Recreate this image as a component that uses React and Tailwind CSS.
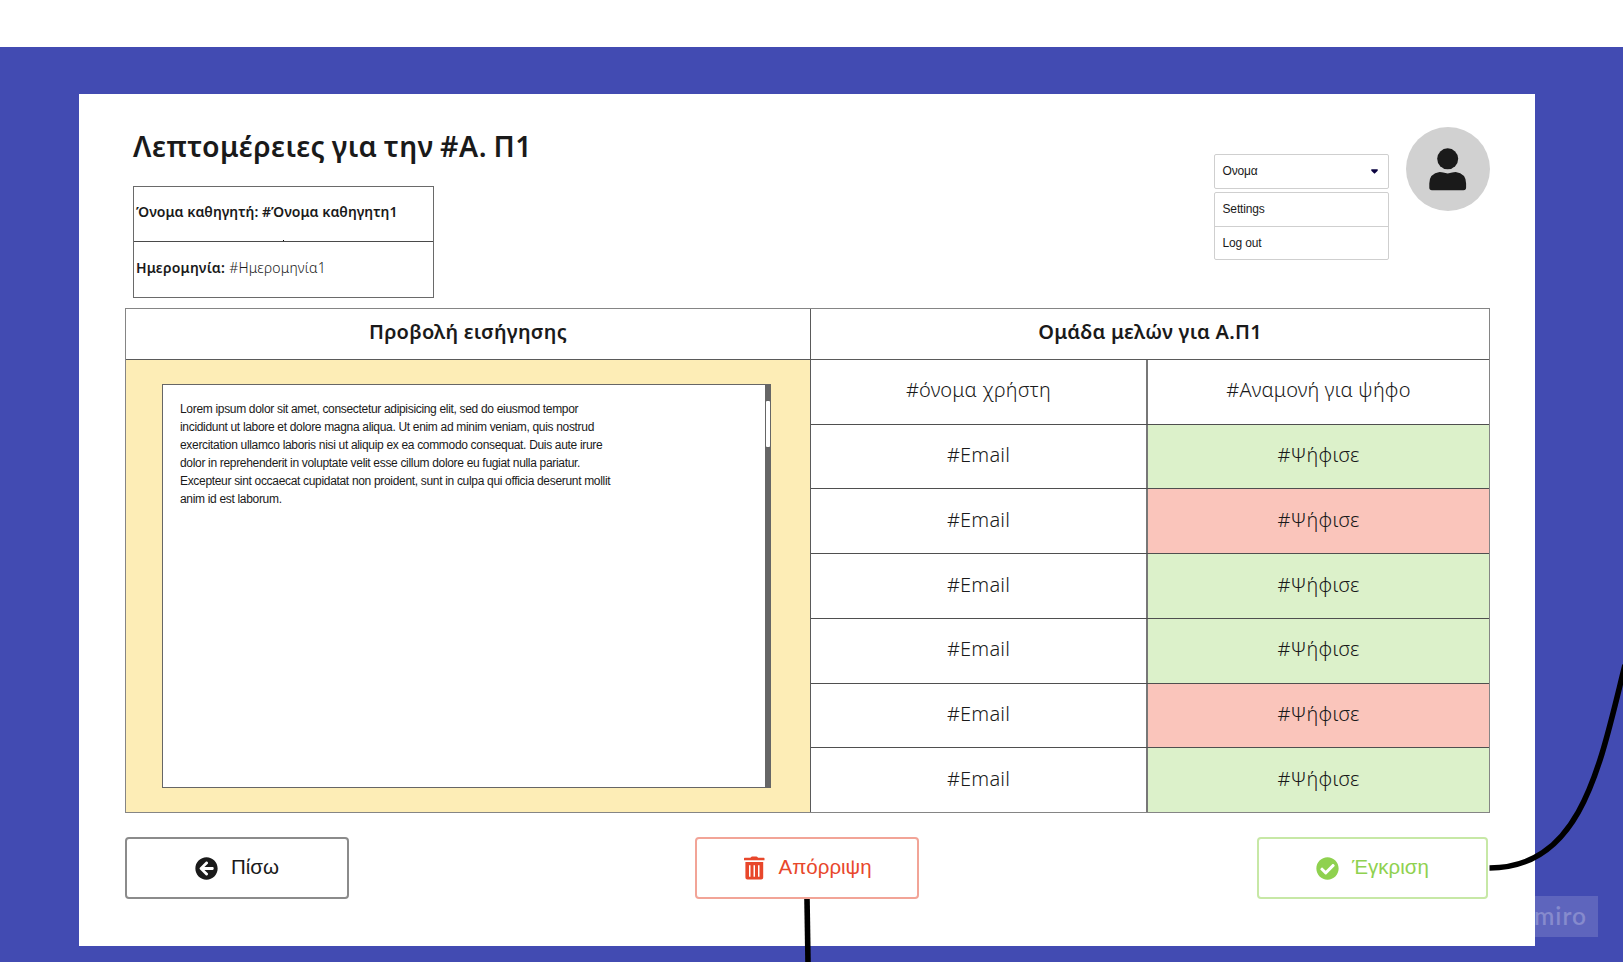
import React from "react";
import { FaArrowCircleLeft, FaCheckCircle } from "react-icons/fa";

const rows = [
  ["#όνομα χρήστη", "#Αναμονή για ψήφο", "bg-white"],
  ["#Email", "#Ψήφισε", "bg-[#dcf1ca]"],
  ["#Email", "#Ψήφισε", "bg-[#fac5bb]"],
  ["#Email", "#Ψήφισε", "bg-[#dcf1ca]"],
  ["#Email", "#Ψήφισε", "bg-[#dcf1ca]"],
  ["#Email", "#Ψήφισε", "bg-[#fac5bb]"],
  ["#Email", "#Ψήφισε", "bg-[#dcf1ca]"],
];

const lorem = [
  "Lorem ipsum dolor sit amet, consectetur adipisicing elit, sed do eiusmod tempor",
  "incididunt ut labore et dolore magna aliqua. Ut enim ad minim veniam, quis nostrud",
  "exercitation ullamco laboris nisi ut aliquip ex ea commodo consequat. Duis aute irure",
  "dolor in reprehenderit in voluptate velit esse cillum dolore eu fugiat nulla pariatur.",
  "Excepteur sint occaecat cupidatat non proident, sunt in culpa qui officia deserunt mollit",
  "anim id est laborum.",
];

function TrashIcon() {
  return (
    <svg width="21" height="24" viewBox="0 0 21 24" fill="currentColor">
      <path d="M.6 1.8H6.4L7.4 .7Q7.7 .4 8.2 .4H12.3Q12.8 .4 13.1 .7L14.1 1.8H19.9Q20.5 1.8 20.5 2.4V4.3H0V2.4Q0 1.8 .6 1.8Z" />
      <path
        fillRule="evenodd"
        d="M1.4 6H19.2V21.4Q19.2 23.4 17.2 23.4H3.4Q1.4 23.4 1.4 21.4ZM5 9.3V20.8H6.5V9.3ZM9.5 9.3V20.8H11V9.3ZM14 9.3V20.8H15.5V9.3Z"
      />
    </svg>
  );
}

function UserIcon() {
  return (
    <svg width="38" height="43" viewBox="0 0 38 43" fill="#1a1a1a">
      <circle cx="18.7" cy="10.8" r="10.5" />
      <path d="M10.7 24Q12.7 24 14.2 24.6Q18.7 26.2 23.2 24.6Q24.7 24 26.7 24Q37.1 25.5 37.1 35.5V39.5Q37.1 42.2 34.5 42.2H2.9Q.3 42.2 .3 39.5V35.5Q.3 25.5 10.7 24Z" />
    </svg>
  );
}

function Header() {
  return (
    <header className="flex h-[214px] justify-between pl-[54px] pr-[45.5px]">
      <div className="w-[301px] pt-[30px]">
        <h1 className="h-[62px] whitespace-nowrap text-[28.5px] font-semibold leading-[44px] tracking-[0.5px] [word-spacing:-1.4px]">
          Λεπτομέρειες για την #Α. Π1
        </h1>
        <div className="h-[112px] border border-[#6a6a6a] text-[14px]">
          <div className="flex h-[55px] items-center border-b border-[#4a4a4a] pb-[6px] pl-[2px] font-semibold tracking-[0.03px]">
            Όνομα καθηγητή: #Όνομα καθηγητη1
          </div>
          <div className="flex h-[55px] items-center gap-1 pb-[4px] pl-[2px] tracking-[0.2px]">
            <span className="font-semibold">Ημερομηνία:</span>
            <span className="font-light">#Ημερομηνία1</span>
          </div>
        </div>
      </div>
      <div className="flex gap-[17px]">
        <div className="w-[175px] pt-[60px] font-['Liberation_Sans',sans-serif] text-[12px] tracking-[-0.15px]">
          <div className="flex h-[35px] items-center justify-between rounded-[2px] border border-[#cfcfcf] pl-2 pr-[10px]">
            <span className="pb-[2px]">Ονομα</span>
            <svg width="7" height="5" viewBox="0 0 7 5">
              <path d="M.3 .3H6.7V1.8L3.5 4.8L.3 1.8Z" fill="#0b0340" />
            </svg>
          </div>
          <div className="mt-[3px] rounded-[2px] border border-[#cfcfcf]">
            <div className="flex h-[34px] items-center border-b border-[#cfcfcf] pb-[2px] pl-2">Settings</div>
            <div className="flex h-[32px] items-center pb-px pl-2">Log out</div>
          </div>
        </div>
        <div className="mt-[33px] flex size-[84px] items-center justify-center rounded-full bg-[#d1d1d1]">
          <UserIcon />
        </div>
      </div>
    </header>
  );
}

function Preview() {
  return (
    <section className="flex w-[684px] flex-col">
      <h2 className="flex h-[51px] items-center justify-center border-b border-[#5a5a5a] pb-[4px] text-[20px] font-semibold tracking-[0.24px]">
        Προβολή εισήγησης
      </h2>
      <div className="flex-1 bg-[#fdedb6] pl-[36px] pt-[24px]">
        <div className="flex h-[404px] w-[609px] border border-r-0 border-[#666666] bg-white">
          <div className="flex-1 pl-[17px] pt-[15px] font-['Liberation_Sans',sans-serif] text-[12px] leading-[18px]">
            {lorem.map((line) => (
              <p key={line} className="w-fit whitespace-nowrap tracking-[-0.32px]">
                {line}
              </p>
            ))}
          </div>
          <div className="w-[6px] bg-[#666666] px-[1px] pt-[16px]">
            <div className="h-[46px] rounded-[1px] bg-white" />
          </div>
        </div>
      </div>
    </section>
  );
}

function Members() {
  return (
    <section className="flex flex-1 flex-col border-l border-[#5a5a5a]">
      <h2 className="flex h-[51px] items-center justify-center border-b border-[#5a5a5a] pb-[4px] text-[20px] font-semibold tracking-[0.24px]">
        Ομάδα μελών για Α.Π1
      </h2>
      <div className="flex flex-1 flex-col divide-y divide-[#4f4f4f] text-[20px] font-light tracking-[0.2px]">
        {rows.map(([name, vote, tone], i) => (
          <div key={i} className="flex flex-1">
            <div className="flex w-[337px] items-center justify-center border-r-2 border-[#777777] pb-[3px]">
              {name}
            </div>
            <div className={"flex flex-1 items-center justify-center pb-[3px] " + tone}>{vote}</div>
          </div>
        ))}
      </div>
    </section>
  );
}

function Actions() {
  return (
    <div className="flex h-[62px] justify-between font-['Liberation_Sans',sans-serif] text-[20.5px]">
      <button className="flex w-[224px] items-center gap-[13px] rounded-[4px] border-2 border-[#8b8b8b] pl-[68px]">
        <FaArrowCircleLeft className="size-[23px]" />
        <span className="pb-[2px]">Πίσω</span>
      </button>
      <button className="ml-[7px] flex w-[224px] items-center gap-[14px] rounded-[4px] border-2 border-[#f2a497] pl-[47px] text-[#e8472b]">
        <TrashIcon />
        <span className="pb-[2px]">Απόρριψη</span>
      </button>
      <button className="flex w-[231px] items-center gap-[13px] rounded-[4px] border-2 border-[#c7e8a6] pl-[57px] text-[#8fd14f]">
        <FaCheckCircle className="size-[23px]" />
        <span className="pb-[2px]">Έγκριση</span>
      </button>
    </div>
  );
}

export default function App() {
  return (
    <div className="relative h-[962px] w-[1623px] overflow-hidden bg-white pt-[47px] font-['Noto_Sans',sans-serif] text-[#1a1a1a]">
      <div className="h-[915px] bg-[#424bb2] pl-[79px] pt-[47px]">
        <main className="h-[852px] w-[1456px] bg-white">
          <Header />
          <div className="ml-[46px] flex h-[505px] w-[1365px] border border-[#858585]">
            <Preview />
            <Members />
          </div>
          <div className="ml-[46px] w-[1363px] pt-[24px]">
            <Actions />
          </div>
        </main>
      </div>
      <div className="absolute left-[1535px] top-[896px] flex h-[41px] w-[63px] items-center overflow-hidden bg-white/15">
        <span className="-ml-px font-['Lato',sans-serif] text-[24.5px] font-semibold leading-none tracking-[1px] text-white/25">
          miro
        </span>
      </div>
      <svg className="absolute left-0 top-0" width="1623" height="962" fill="none" stroke="#000" strokeWidth="5.6">
        <path d="M807 899L808 962" />
        <path d="M1489.5 868C1582 868 1600 765 1625 665" />
      </svg>
      <div className="absolute left-[283px] top-[240px] h-px w-px bg-black" />
    </div>
  );
}
